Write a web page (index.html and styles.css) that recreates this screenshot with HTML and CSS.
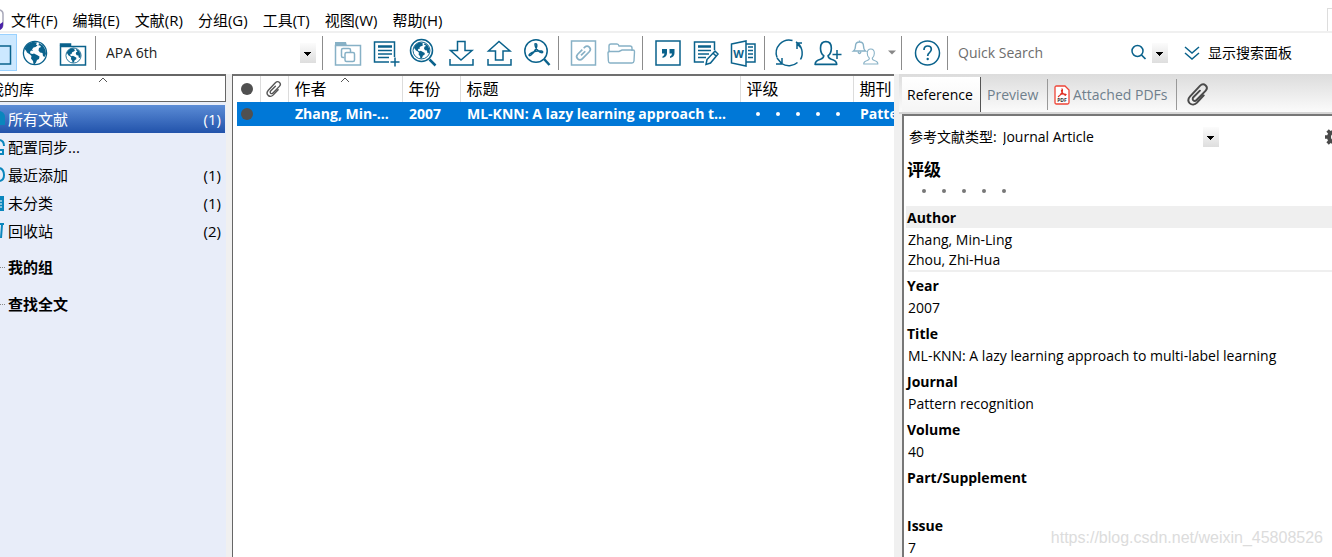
FILE: index.html
```html
<!DOCTYPE html>
<html lang="zh-CN">
<head>
<meta charset="utf-8">
<title>Reference Library</title>
<link rel="stylesheet" href="styles.css">
</head>
<body>
<svg class="defs" aria-hidden="true">
  <symbol id="globe" viewBox="0 0 26 26">
    <circle cx="13" cy="13" r="11.6" fill="#fff" stroke="currentColor" stroke-width="1.3"/>
    <path fill="currentColor" d="M3 8C5 4 9 1.700 12 2l3 .5-1 2 1.500 1-2 1.500-2 .5-1.500 2 1 1.500-2-.5-1 1.500.5 1.500 2 .5 1.500-.5 3 1.500 2.500 1.500-.5 2.500-2 1-1 2.500-1.500 2-1-.5-.5-3-2-2.500.5-2.500-1.500-1.500-3-2-1.500-3L2.500 12z"/>
    <path fill="currentColor" d="M17 3l4 2.500 2.500 4.500.5 4-1.500 3-1.500-1-.5-3-2.500-.5-1.500-2 .5-2.500 2-1-1-1.500-1.500 0z"/>
  </symbol>
  <symbol id="clip" viewBox="0 0 24 26">
    <path fill="none" stroke="currentColor" stroke-width="2" stroke-linecap="round" d="M18 14l-7 7.500c-2.300 2.300-5.500 2.500-7.500.700-2-2-1.800-5 .3-7.300L14 4c1.800-1.800 4.300-1.900 6-.400 1.600 1.600 1.500 3.800-.2 5.600l-9.300 9.500c-1 1-2.500 1.100-3.400.300-.900-.900-.8-2.300.3-3.400L14 9"/>
  </symbol>
  <symbol id="person" viewBox="0 0 24 24">
    <path fill="none" stroke="currentColor" stroke-width="1.500" stroke-linejoin="round" d="M9 14.500c-2-1.500-3-4-3-7C6 3.500 8 1.500 11 1.500s5 2 5 6c0 3-1 5.500-3 7 0 2 1 2.500 3 3.200 3 .8 5 1.800 5 4.800H1c0-3 2-4 5-4.800 2-.7 3-1.200 3-3.200z"/>
  </symbol>
</svg>

<div class="app">
  <nav class="menubar">
    <svg class="logo" viewBox="0 0 5 22"><path d="M0 1c2 .5 3 2 3 4v10c0 2-1 4-3 5" fill="none" stroke="#a9a9ba" stroke-width="1.500"/><path d="M0 15l3-2v3c0 2-1 4-3 5z" fill="#4a22a8"/></svg>
    <button>文件(F)</button><button>编辑(E)</button><button>文献(R)</button><button>分组(G)</button><button>工具(T)</button><button>视图(W)</button><button>帮助(H)</button>
    <span class="corner"></span>
  </nav>

  <div class="toolbar">
    <button class="tool home" aria-label="Local library"><svg viewBox="0 0 17 32"><path d="M0 9H10.500V27H0" fill="none" stroke="currentColor" stroke-width="1.500"/></svg></button>
    <div class="group web">
      <button class="tool" aria-label="Online search"><svg viewBox="0 0 32 32"><use href="#globe" x="3" y="3" width="26" height="26"/></svg></button>
      <button class="tool" aria-label="Integrated library"><svg viewBox="0 0 32 32"><path d="M3.500 9V7h10v2" fill="currentColor" stroke="currentColor" stroke-width="1.500"/><path d="M3.500 9.500h25V28h-25z" fill="none" stroke="currentColor" stroke-width="1.500"/><use href="#globe" x="8" y="10" width="17" height="17"/></svg></button>
    </div>
    <div class="group style">
      <select class="style-select" aria-label="Output style"><option>APA 6th</option></select>
    </div>
    <div class="group">
      <button class="tool faded" aria-label="Copy to library"><svg viewBox="0 0 32 32"><path d="M4 5h11l1 4H4z" fill="currentColor"/><path d="M4.500 8.500h25V28h-25z M13.500 20.500h-1.500q-1.500 0-1.500-1.500v-6q0-1.500 1.500-1.500h6q1.500 0 1.500 1.500v2" fill="none" stroke="currentColor" stroke-width="1.500"/><rect x="14" y="15.500" width="9.500" height="9" rx="1.500" fill="none" stroke="currentColor" stroke-width="1.500"/></svg></button>
      <button class="tool" aria-label="New reference"><svg viewBox="0 0 32 32"><path d="M20 25H5.500V5H25.500V20M9 13.500H23M9 17H23M9 20.500H20M26 20.500v9M21.500 25h9" fill="none" stroke="currentColor" stroke-width="1.500"/><path d="M9 9.500H23" stroke="currentColor" stroke-width="2.500"/></svg></button>
      <button class="tool" aria-label="Search online"><svg viewBox="0 0 32 32"><use href="#globe" x="5" y="4" width="19" height="19"/><circle cx="14.500" cy="13.500" r="11" fill="none" stroke="currentColor" stroke-width="1.500"/><path d="M22.500 22.500l6 6" stroke="currentColor" stroke-width="2.500"/></svg></button>
      <button class="tool" aria-label="Import"><svg viewBox="0 0 32 32"><path d="M12.500 4.500h7.500v9h7L16 23 5.500 13.500h7zM5 22v6h23v-6" fill="none" stroke="currentColor" stroke-width="1.500"/></svg></button>
      <button class="tool" aria-label="Export"><svg viewBox="0 0 32 32"><path d="M12.500 23V14h-7L16 4.500 27 14h-7v9zM5 22v6h23v-6" fill="none" stroke="currentColor" stroke-width="1.500"/></svg></button>
      <button class="tool" aria-label="Find full text"><svg viewBox="0 0 32 32"><circle cx="15" cy="14" r="11.200" fill="none" stroke="currentColor" stroke-width="1.500"/><path d="M23 22l5.500 6" stroke="currentColor" stroke-width="2.500"/><path d="M14 7q2-1 1.800 2Q15 13.500 10.500 17.500q-2 2-2.500.500Q9.500 15 16.500 14q5.500-.5 5.200 1.200-.8 1.300-3.700-.9Q14 11.500 14 7z" fill="none" stroke="currentColor" stroke-width="1.500"/></svg></button>
    </div>
    <div class="group">
      <button class="tool faded" aria-label="Open link"><svg viewBox="0 0 32 32"><rect x="4.500" y="4" width="24" height="24" fill="none" stroke="currentColor" stroke-width="1.500"/><g transform="rotate(-45 16.500 16)" fill="none" stroke="currentColor" stroke-width="1.700"><path d="M18 12.800h-6.500a3.200 3.200 0 0 0 0 6.400H15M15 19.200h6.500a3.200 3.200 0 0 0 0-6.400H20M13 16h6"/></g></svg></button>
      <button class="tool faded" aria-label="Open file"><svg viewBox="0 0 32 32"><path d="M4 15V9q0-2 2-2h6q1.500 0 2 2h11q2 0 2 2v3M5 26q-1.500 0-1.600-2L3 16q0-1.500 2-1.500h9l3-1.500h11q1.500 0 1.500 1.500L29 24q-.300 2-2 2z" fill="none" stroke="currentColor" stroke-width="1.400"/></svg></button>
    </div>
    <div class="group">
      <button class="tool" aria-label="Insert citation"><svg viewBox="0 0 32 32"><rect x="5" y="4" width="24" height="24" fill="none" stroke="currentColor" stroke-width="1.500"/><path d="M11 12h5v4q0 4-4.500 5v-1.500q2-.8 2-3H11zM18.500 12h5v4q0 4-4.500 5v-1.500q2-.8 2-3h-2.500z" fill="currentColor"/></svg></button>
      <button class="tool" aria-label="Format bibliography"><svg viewBox="0 0 32 32"><path d="M15 25H5.500V5H25.500V13M9 13.500h13M9 17h11M9 20.500h8M17 27.500l1-5L26 14l3 3-7.500 9zM24 16l3 3" fill="none" stroke="currentColor" stroke-width="1.500"/><path d="M9 9.500H22" stroke="currentColor" stroke-width="2.500"/></svg></button>
      <button class="tool" aria-label="Word processor"><svg viewBox="0 0 32 32"><path d="M4.500 7L19 4v25L4.500 26zM19 7h9v18h-9M21 10h5M21 13.500h5M21 17h5M21 20.500h5" fill="none" stroke="currentColor" stroke-width="1.500"/><text x="11.500" y="20.500" text-anchor="middle" class="word-mark">W</text></svg></button>
    </div>
    <div class="group sync">
      <button class="tool" aria-label="Sync"><svg viewBox="0 0 32 32"><path d="M4 20.500A13 13 0 0 1 19.500 3.500M23 5A13 13 0 0 1 27.500 22.500M24.500 25.500A13 13 0 0 1 8.500 26.500M29 6H24v6M3 27h6v-6M24 6l3 4M9 27l-5-6" fill="none" stroke="currentColor" stroke-width="1.500"/></svg></button>
      <button class="tool" aria-label="Share library"><svg viewBox="0 0 32 32"><use href="#person" x="3" y="3" width="26" height="26"/><path d="M26 13v9M21.500 17.500h9" stroke="currentColor" stroke-width="1.500"/></svg></button>
      <button class="tool faded" aria-label="Activity feed"><svg viewBox="0 0 32 32"><path d="M4.500 14q2-1.500 2-5 0-4 4-4t4 4q0 3.500 2 5zM10.500 5V3.500M9 15q1.500 3 3 0" fill="none" stroke="currentColor" stroke-width="1.400"/><use href="#person" x="14" y="11" width="17" height="17"/></svg></button>
      <button class="drop" aria-label="More"></button>
    </div>
    <div class="group help">
      <button class="tool" aria-label="Help"><svg viewBox="0 0 32 32"><circle cx="16.500" cy="16" r="12" fill="none" stroke="currentColor" stroke-width="1.500"/><path d="M13 13q0-4 3.700-4 3.600 0 3.600 3.300 0 2-1.800 3.300-1.800 1.200-1.800 3.400" fill="none" stroke="currentColor" stroke-width="1.700"/><circle cx="16.700" cy="22" r="1.200" fill="currentColor"/></svg></button>
    </div>
    <div class="group search">
      <input class="quick" type="text" placeholder="Quick Search" aria-label="Quick Search">
      <button class="find" aria-label="Search"><svg viewBox="0 0 18 18"><circle cx="7.500" cy="7" r="5.500" fill="none" stroke="currentColor" stroke-width="1.500"/><path d="M11.500 11l4 4" stroke="currentColor" stroke-width="1.700"/></svg></button>
      <button class="arrow-button" aria-label="Search options"></button>
      <button class="panel-toggle"><svg viewBox="0 0 16 16"><path d="M1 2l7 6 7-6M1 8l7 6 7-6" fill="none" stroke="currentColor" stroke-width="1.500"/></svg><span>显示搜索面板</span></button>
    </div>
  </div>

  <div class="workspace">
    <aside class="sidebar">
      <div class="library-head"><span>我的库</span><svg class="sort" viewBox="0 0 10 6"><path d="M1 5l4-4 4 4" fill="none" stroke="#555"/></svg></div>
      <ul class="tree">
        <li class="selected"><svg viewBox="0 0 8 20"><path d="M0 2q4 1 5 5v9H0z" fill="#0a86bd"/></svg><span>所有文献</span><b>(1)</b></li>
        <li><svg viewBox="0 0 8 20"><path d="M0 3q4 1 4 6M0 17h3v-4H0" fill="none" stroke="#0a86bd" stroke-width="2"/></svg><span>配置同步...</span></li>
        <li><svg viewBox="0 0 8 20"><path d="M0 3q4 2 4 7t-4 6" fill="none" stroke="#0a86bd" stroke-width="2"/></svg><span>最近添加</span><b>(1)</b></li>
        <li><svg viewBox="0 0 8 20"><path d="M0 3h4v15H0z" fill="#0a86bd"/><path d="M0 8h2M0 11h2M0 14h2" stroke="#fff"/></svg><span>未分类</span><b>(1)</b></li>
        <li><svg viewBox="0 0 8 20"><path d="M0 3h4M2 4l-1 13" fill="none" stroke="#0a86bd" stroke-width="2"/></svg><span>回收站</span><b>(2)</b></li>
        <li class="heading"><i></i><span>我的组</span></li>
        <li class="heading"><i></i><span>查找全文</span></li>
      </ul>
    </aside>

    <main class="list">
      <table>
        <colgroup><col class="c-dot"><col class="c-clip"><col class="c-author"><col class="c-year"><col class="c-title"><col class="c-rating"><col class="c-journal"></colgroup>
        <thead><tr>
          <th aria-label="Read"><span class="dot"></span></th>
          <th aria-label="Attachment"><svg class="clip-small"><use href="#clip"/></svg></th>
          <th class="sorted">作者<svg class="sort" viewBox="0 0 10 6"><path d="M1 5l4-4 4 4" fill="none" stroke="#555"/></svg></th>
          <th>年份</th><th>标题</th><th>评级</th><th>期刊</th>
        </tr></thead>
        <tbody><tr>
          <td><span class="dot"></span></td><td></td><td>Zhang, Min-Ling</td><td>2007</td><td>ML-KNN: A lazy learning approach to multi-label learning</td>
          <td class="rating"><span class="stars"><i></i><i></i><i></i><i></i><i></i></span></td><td class="cut">Pattern recognition</td>
        </tr></tbody>
      </table>
    </main>

    <section class="detail">
      <div class="tabs" role="tablist">
        <button class="tab active" role="tab" aria-selected="true">Reference</button>
        <button class="tab preview" role="tab">Preview</button>
        <button class="tab pdfs" role="tab"><svg viewBox="0 0 16 20"><path d="M2.500 1h8.500l4 4v12.500q0 1.500-1.500 1.500h-11Q1 19 1 17.500v-15Q1 1 2.500 1z" fill="#fff" stroke="#ee4437" stroke-width="1.300"/><path d="M7.500 4q1.500 0 .5 3.500-1.500 3-4 4.300M6 9.300q4-1.200 6.500.5M7.500 5q0 3.500 4.500 5.500" fill="none" stroke="#e02c20" stroke-width="1.300"/><text x="8" y="17" text-anchor="middle" class="pdf-mark">PDF</text></svg><span>Attached PDFs</span></button>
        <button class="tab attach" aria-label="Attach file"><svg><use href="#clip"/></svg></button>
      </div>
      <div class="record">
        <div class="type-row">
          <label for="reftype">参考文献类型:</label>
          <select id="reftype"><option>Journal Article</option></select>
          <button class="gear" aria-label="Settings"><svg viewBox="0 0 20 20"><circle cx="10" cy="10" r="5" fill="none" stroke="currentColor" stroke-width="4"/><path d="M10 1v4M10 15v4M1 10h4M15 10h4M3.600 3.600l3 3M13.400 13.400l3 3M3.600 16.400l3-3M13.400 6.600l3-3" stroke="currentColor" stroke-width="3.500"/></svg></button>
        </div>
        <h2>评级</h2>
        <span class="stars gray"><i></i><i></i><i></i><i></i><i></i></span>
        <dl>
          <div class="current"><dt>Author</dt><dd>Zhang, Min-Ling<br>Zhou, Zhi-Hua</dd></div>
          <div><dt>Year</dt><dd>2007</dd></div>
          <div><dt>Title</dt><dd>ML-KNN: A lazy learning approach to multi-label learning</dd></div>
          <div><dt>Journal</dt><dd>Pattern recognition</dd></div>
          <div><dt>Volume</dt><dd>40</dd></div>
          <div><dt>Part/Supplement</dt><dd></dd></div>
          <div><dt>Issue</dt><dd>7</dd></div>
        </dl>
      </div>
    </section>
  </div>
  <span class="watermark">https://blog.csdn.net/weixin_45808526</span>
</div>
</body>
</html>
```
FILE: styles.css
```css
* { box-sizing: border-box; }

body {
  margin: 0;
  background: #fff;
  color: #000;
  font: 14px/20px "Open Sans", "Noto Sans CJK SC", sans-serif;
}

button, select, input {
  margin: 0;
  padding: 0;
  border: 0;
  border-radius: 0;
  background: none;
  color: inherit;
  font: inherit;
}

select { appearance: none; }
.defs { position: absolute; width: 0; height: 0; }

.app {
  position: relative;
  display: flex;
  flex-direction: column;
  height: 100vh;
  overflow: hidden;
}

/* Menu bar */
.menubar {
  display: flex;
  flex: none;
  align-items: center;
  gap: 15px;
  height: 33px;
  padding-top: 8px;
  border-bottom: 2px solid #f0f0f0;
}
.menubar button { font-size: 15px; white-space: nowrap; }
.logo { width: 5px; height: 22px; margin-right: -9px; }
.corner {
  align-self: stretch;
  width: 5px;
  margin-left: auto;
  border: 1px solid #ddd;
  border-width: 1px 0 0 1px;
}

/* Toolbar */
.toolbar {
  display: flex;
  flex: none;
  align-items: center;
  height: 41px;
  padding-bottom: 2px;
  color: #0a628c;
}
.group {
  display: flex;
  align-items: center;
  height: 34px;
  padding: 0 2px 0 5px;
  border-left: 1px solid #8c8c8c;
}
.group.web { margin-left: -1px; padding: 0 3px 0 0; border: 0; }
.group.style { width: 227px; padding: 0 6px 0 10px; }
.group.sync { padding-right: 3px; }
.group.help { padding: 0 1px 0 6px; }
.tool {
  display: grid;
  flex: none;
  place-items: center;
  width: 38px;
  height: 34px;
}
.tool svg { width: 32px; height: 32px; }
.tool.faded { color: #87b1c6; }
.tool.home {
  width: 17px;
  height: 37px;
  border: 1px solid #99d1ff;
  border-left: 0;
  background: #cce8ff;
}
.tool.home svg { width: 17px; }
.drop {
  width: 14px;
  height: 20px;
  background: #888;
  clip-path: polygon(4px 8px, 12px 8px, 8px 12px);
}
.word-mark { font: bold 11px "Open Sans", sans-serif; fill: currentColor; }

.style-select, #reftype, .arrow-button {
  background:
    linear-gradient(#000, #000) right 5px top 9px / 7px 1px no-repeat,
    linear-gradient(#000, #000) right 6px top 10px / 5px 1px no-repeat,
    linear-gradient(#000, #000) right 7px top 11px / 3px 1px no-repeat,
    linear-gradient(#000, #000) right 8px top 12px / 1px 1px no-repeat,
    linear-gradient(#fcfcfc, #dedede) right / 16px 20px no-repeat;
}
.style-select { width: 100%; height: 20px; color: #222; }

.group.search { flex: 1; min-width: 0; padding: 0 0 0 10px; }
.quick { width: 172px; height: 24px; outline: 0; color: #333; }
.quick::placeholder { color: #6d6d6d; opacity: 1; }
.find { display: flex; width: 22px; }
.find svg { width: 18px; height: 18px; }
.arrow-button { flex: none; width: 16px; height: 20px; }
.panel-toggle {
  display: flex;
  align-items: center;
  gap: 8px;
  padding-left: 16px;
  white-space: nowrap;
}
.panel-toggle svg { width: 16px; height: 16px; }
.panel-toggle span { color: #000; }

/* Workspace */
.workspace {
  display: flex;
  flex: 1;
  min-height: 0;
  background: #f0f0f0;
}

.sidebar {
  flex: none;
  width: 226px;
  overflow: hidden;
  background: #e8edf9;
}
.library-head {
  position: relative;
  height: 28px;
  border: 1px solid #666;
  border-width: 2px 1px 1px 0;
  background: #fff;
  font-size: 15px;
  line-height: 26px;
}
.library-head span { margin-left: -11px; }
.sort {
  position: absolute;
  top: 1px;
  left: 50%;
  width: 10px;
  height: 6px;
  margin-left: -5px;
}
.library-head .sort { margin-left: -15px; }
.tree {
  margin: 0;
  padding: 3px 1px 0 0;
  list-style: none;
  font-size: 15px;
}
.tree li { display: flex; align-items: center; height: 28px; padding-right: 4px; }
.tree svg { width: 8px; height: 20px; }
.tree span { flex: 1; }
.tree b { font-weight: normal; }
.tree .selected { background: linear-gradient(#5b8cd6, #2253ab); color: #fff; }
.tree .heading { height: 37px; padding-top: 7px; font-weight: bold; }
.tree .heading i { width: 5px; margin-right: 3px; border-top: 1px dotted #888; }

.list {
  flex: 1;
  min-width: 0;
  margin-left: 6px;
  padding-left: 4px;
  overflow: hidden;
  border-top: 2px solid #707070;
  border-left: 1px solid #666;
  background: #fff;
}
table {
  width: 100%;
  border-collapse: collapse;
  table-layout: fixed;
  font-size: 14px;
}
.c-dot { width: 23px; }
.c-clip { width: 28px; }
.c-author { width: 114px; }
.c-year { width: 58px; }
.c-title { width: auto; }
.c-rating { width: 113px; }
.c-journal { width: 41px; }
th, td {
  padding: 0 9px 0 6px;
  overflow: hidden;
  text-align: left;
  text-overflow: ellipsis;
  white-space: nowrap;
}
th {
  position: relative;
  height: 26px;
  border-right: 1px solid #dcdcdc;
  font-size: 16px;
  font-weight: normal;
}
th:last-child { padding-right: 0; border-right: 0; }
td {
  height: 24px;
  padding-left: 7px;
  background: #0078d7;
  color: #fff;
  font-weight: bold;
}
td.cut { padding-right: 0; text-overflow: clip; }
th:nth-child(-n+2), td:nth-child(-n+2) { padding: 0 4px; }
.dot { display: block; width: 12px; height: 12px; border-radius: 50%; background: #505050; }
.clip-small { display: block; width: 18px; height: 18px; color: #555; }
.stars { display: flex; gap: 16px; padding-left: 9px; }
.stars i { flex: none; width: 4px; height: 4px; border-radius: 50%; background: #fff; }

/* Reference detail */
.detail {
  display: flex;
  flex: none;
  flex-direction: column;
  width: 433px;
  margin-left: 5px;
}
.tabs {
  display: flex;
  flex: none;
  height: 40px;
  padding: 3px 0 0 3px;
  border-bottom: 2px solid #d6d6d6;
  background: linear-gradient(#dcdcdc, #fbfbfb);
}
.tab { display: flex; align-items: center; color: #6f7f8c; white-space: nowrap; }
.tab.active {
  width: 79px;
  padding-left: 5px;
  border-right: 1px solid #555;
  background: linear-gradient(#fff, #f5f5f5);
  color: #000;
}
.tab.preview, .tab.pdfs { height: 31px; margin-top: 2px; border-right: 1px solid #999; }
.tab.preview { width: 67px; padding-left: 6px; }
.tab.pdfs { gap: 3px; width: 129px; padding-left: 6px; }
.tab.pdfs svg { width: 16px; height: 20px; }
.pdf-mark { font: bold 5px "Open Sans", sans-serif; fill: #333; }
.tab.attach { padding-left: 9px; color: #4a4a4a; }
.tab.attach svg { width: 24px; height: 25px; }

.record {
  flex: 1;
  min-height: 0;
  margin-left: 3px;
  padding: 11px 0 0 2px;
  overflow: hidden;
  border-top: 2px solid #777;
  border-left: 2px solid #777;
  background: #fff;
}
.type-row { display: flex; align-items: center; height: 20px; padding-left: 3px; }
.type-row label { white-space: nowrap; }
#reftype { width: 216px; height: 20px; margin-left: 6px; }
.gear { margin: 0 -12px 0 auto; color: #4a4a4a; }
.gear svg { display: block; width: 20px; height: 20px; }
h2 { margin: 10px 0 0 1px; font-size: 17px; line-height: 26px; }
.stars.gray { padding: 6px 0 13px 16px; }
.stars.gray i { background: #777; }
dl { margin: 0; }
dl > div { padding-bottom: 4px; }
dt { height: 22px; padding-left: 1px; font-weight: bold; line-height: 24px; }
dd { min-height: 22px; margin: 0 0 0 2px; padding-top: 2px; }
.current dt { background: #efefef; }
.current dd { border-bottom: 2px solid #efefef; }
dl > .current { padding-bottom: 2px; }

.watermark {
  position: absolute;
  right: 9px;
  bottom: 9px;
  color: #dcdcdc;
  font: 16px/20px "Liberation Sans", sans-serif;
}
```
